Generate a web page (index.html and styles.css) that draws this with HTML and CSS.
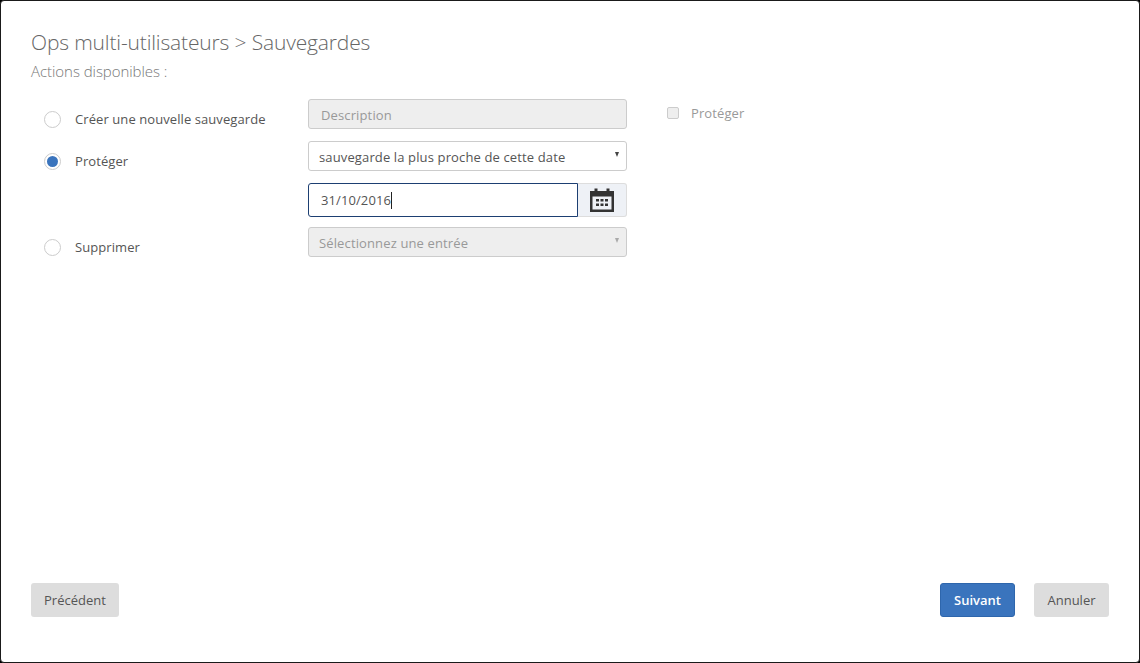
FILE: index.html
```html
<!DOCTYPE html>
<html lang="fr">
<head>
<meta charset="utf-8">
<title>Sauvegardes</title>
<link rel="stylesheet" href="styles.css">
</head>
<body>
<main class="dialog">
  <header class="head">
    <h1 class="title">Ops multi-utilisateurs &gt; Sauvegardes</h1>
    <p class="subtitle">Actions disponibles :</p>
  </header>
  <section class="form">
    <div class="row row-create">
      <label class="choice"><span class="radio"></span><span>Créer une nouvelle sauvegarde</span></label>
      <div class="field field-disabled"><span class="placeholder-desc">Description</span></div>
      <label class="check"><span class="box"></span><span>Protéger</span></label>
    </div>
    <div class="row row-protect">
      <label class="choice"><span class="radio radio-on"></span><span>Protéger</span></label>
      <div class="field select"><span>sauvegarde la plus proche de cette date</span><span class="arrow"></span></div>
    </div>
    <div class="row row-date">
      <span class="choice"></span>
      <div class="datebox">
        <div class="date-input"><span>31/10/2016</span><span class="caret"></span></div>
        <div class="date-btn">
          <svg width="24" height="24" viewBox="0 0 24 24" aria-hidden="true">
            <path fill="#333" fill-rule="evenodd" d="M0 3h4.500V0.500h3V3h9V0.500h3V3H24v21H0zM2.500 8.500V21.500h19V8.500z"/>
            <path fill="#333" d="M6 11h3v2.500H6zM10.500 11h3v2.500h-3zM15 11h3v2.500h-3zM6 15.500h3V18H6zM10.500 15.500h3V18h-3zM15 15.500h3V18h-3z"/>
          </svg>
        </div>
      </div>
    </div>
    <div class="row row-delete">
      <label class="choice"><span class="radio"></span><span>Supprimer</span></label>
      <div class="field select field-disabled select-disabled"><span>Sélectionnez une entrée</span><span class="arrow"></span></div>
    </div>
  </section>
  <footer class="foot">
    <button class="btn" type="button">Précédent</button>
    <div class="foot-right">
      <button class="btn btn-primary" type="button">Suivant</button>
      <button class="btn btn-cancel" type="button">Annuler</button>
    </div>
  </footer>
</main>
</body>
</html>
```
FILE: styles.css
```css
* { box-sizing: border-box; }
html, body { margin: 0; height: 100%; background: #000; }
body { font-family: "Open Sans", "Liberation Sans", sans-serif; font-size: 13px; color: #555; }
.dialog {
  width: 1140px; height: 663px;
  background: #fff;
  border: 1px solid #1a1a1a;
  border-radius: 4px;
  padding: 27px 30px 45px;
  display: flex; flex-direction: column;
}
.head { height: 71px; }
.title { margin: 0; font-size: 21px; line-height: 28px; font-weight: 300; color: #666; letter-spacing: -0.15px; }
.subtitle { margin: 5px 0 0; font-size: 15px; line-height: 20px; font-weight: 300; color: #777; letter-spacing: -0.05px; }
.form { display: flex; flex-direction: column; flex: 1; }
.row { display: flex; align-items: flex-start; }
.row-create { height: 42px; }
.row-protect { height: 42px; }
.row-date { height: 44px; }
.choice { width: 277px; padding-left: 13px; height: 30px; padding-top: 10px; display: flex; align-items: center; gap: 14px; font-size: 13px; color: #555; letter-spacing: 0.08px; }
.radio { width: 17px; height: 17px; border-radius: 50%; border: 1px solid #ccc; background: #fff; flex: none; position: relative; }
.radio-on::after { content: ""; position: absolute; left: 2px; top: 2px; width: 11px; height: 11px; border-radius: 50%; background: #3a74bd; }
.field { width: 319px; height: 30px; border: 1px solid #ccc; border-radius: 3px; background: #fff; display: flex; align-items: center; padding-left: 10px; padding-top: 2px; font-size: 13px; color: #555; letter-spacing: 0.13px; }
.field-disabled { background: #eee; color: #999; }
.placeholder-desc { padding-left: 2px; }
.select { justify-content: space-between; padding-right: 7px; }
.arrow { width: 0; height: 0; margin-top: -5px; border-left: 2.500px solid transparent; border-right: 2.500px solid transparent; border-top: 5px solid #444; }
.select-disabled .arrow { border-top-color: #aaa; }
.check { display: flex; align-items: center; gap: 12px; margin-left: 40px; height: 28px; color: #999; font-size: 13px; letter-spacing: 0.1px; }
.box { width: 12px; height: 12px; border: 1px solid #ccc; border-radius: 2px; background: #eee; }
.datebox { width: 319px; height: 34px; display: flex; }
.date-input { width: 270px; border: 1px solid #1d3f72; border-radius: 3px 0 0 3px; display: flex; align-items: center; padding-left: 12px; color: #555; letter-spacing: 0.1px; }
.caret { width: 1px; height: 17px; background: #222; }
.date-btn { flex: 1; background: #eef1f6; border: 1px solid #ddd; border-left: 0; border-radius: 0 3px 3px 0; display: flex; align-items: center; justify-content: center; }
.foot { display: flex; justify-content: space-between; }
.foot-right { display: flex; gap: 19px; }
.btn { height: 34px; padding: 0 13px; border: 0; border-radius: 3px; background: #ddd; color: #555; font: 13px "Open Sans", "Liberation Sans", sans-serif; }
.btn-primary { width: 75px; padding: 0; background: #3a74bd; border: 1px solid #2e66ac; color: #fff; font-weight: 600; }
.btn-cancel { width: 75px; padding: 0; }
```
